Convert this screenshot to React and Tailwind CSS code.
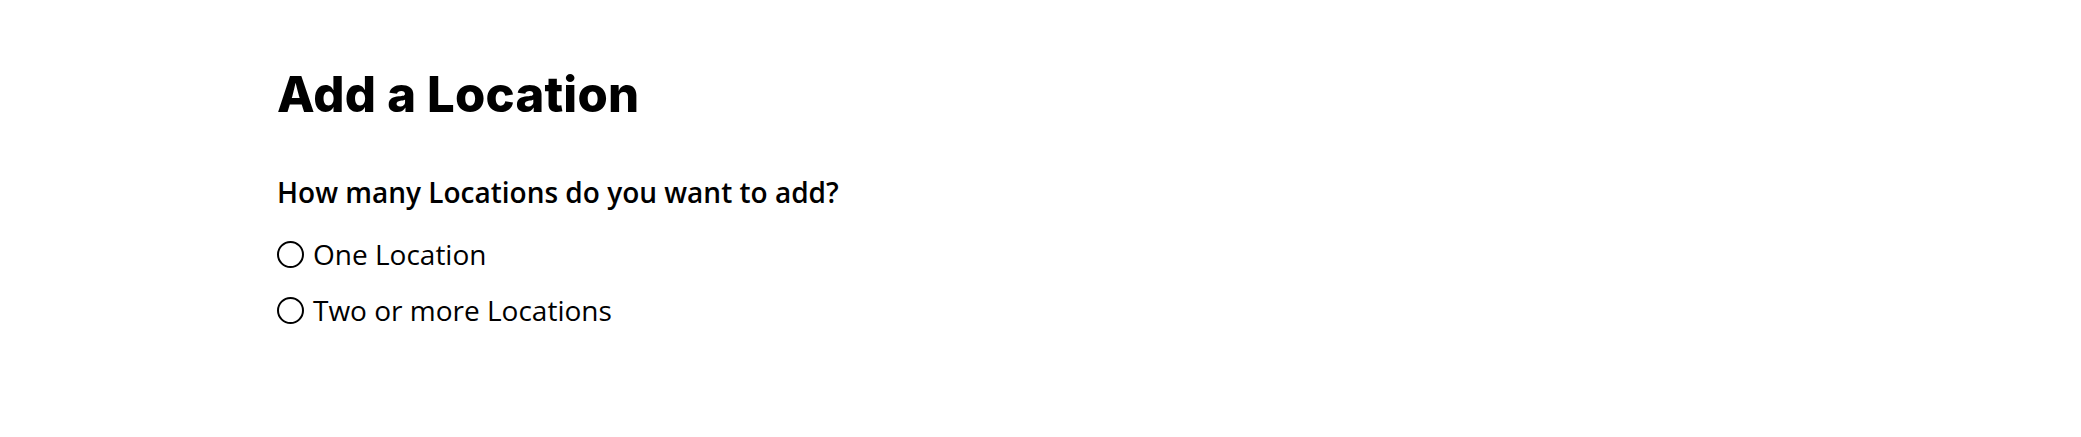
import React, { useState } from 'react';

const options = [
  { id: 'one', label: 'One Location' },
  { id: 'many', label: 'Two or more Locations' },
];

const App = () => {
  const [choice, setChoice] = useState(null);

  return (
    <div className="min-h-[437px] w-full bg-white pl-[277px] pt-[65px] text-black">
      <h1 className="font-['Inter',sans-serif] text-[49px] font-extrabold leading-[60px] tracking-[0.2px]">
        Add a Location
      </h1>

      <fieldset className="mt-[48px] font-['Open_Sans',sans-serif]">
        <legend className="text-[28px] font-semibold leading-[38px]">
          How many Locations do you want to add?
        </legend>

        <div className="mt-[24px] flex flex-col gap-[18px]">
          {options.map((opt) => (
            <label key={opt.id} className="flex cursor-pointer items-center gap-[9px] text-[28px] leading-[38px]">
              <input
                type="radio"
                name="locations"
                value={opt.id}
                checked={choice === opt.id}
                onChange={() => setChoice(opt.id)}
                className="sr-only"
              />
              <span className="flex h-[27px] w-[27px] items-center justify-center rounded-full border-2 border-black">
                {choice === opt.id && <span className="h-[13px] w-[13px] rounded-full bg-black" />}
              </span>
              <span>{opt.label}</span>
            </label>
          ))}
        </div>
      </fieldset>
    </div>
  );
};

export default App;
